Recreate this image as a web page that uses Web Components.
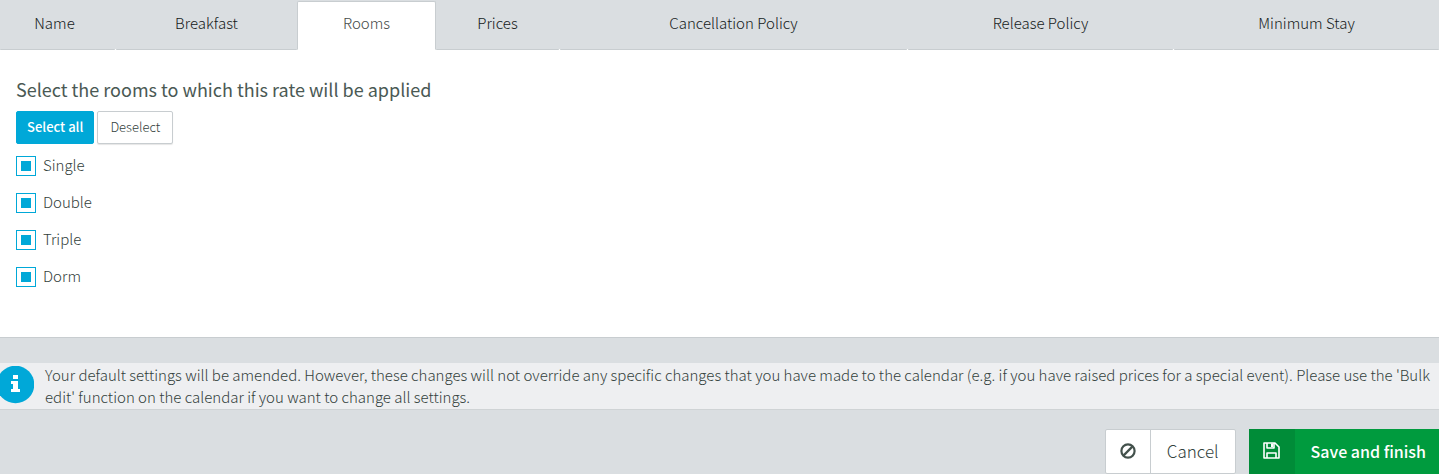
<!DOCTYPE html>
<html lang="en">
<head>
<meta charset="utf-8">
<meta name="viewport" content="width=device-width, initial-scale=1">
<title>Rate rooms</title>
<style>
  html { background: #dadee1; }
  body {
    margin: 0;
    color: #33413c;
    font-family: "Source Sans Pro", "Noto Sans CJK SC", sans-serif;
    font-size: 15px;
    font-weight: 300;
    line-height: 22px;
    --accent: #00a8d8;
    --line: #c8cdd0;
    --bar: #dadee1;
  }
</style>
</head>
<body>
<rate-page></rate-page>
<script>
  const define = (name, html, setup) => {
    const template = document.createElement('template');
    template.innerHTML = '<style>*{box-sizing:border-box}button,input{font:inherit;margin:0}</style>' + html;
    customElements.define(name, class extends HTMLElement {
      constructor() {
        super();
        this.attachShadow({ mode: 'open' }).append(template.content.cloneNode(true));
      }
      connectedCallback() { if (setup) setup(this, this.shadowRoot); }
    });
  };

  define('rate-tab', `
    <style>
      :host { display: block; }
      button {
        display: block; width: 100%; height: 50px; padding: 0 0 4px;
        border: 1px solid transparent; border-bottom-color: var(--line);
        background: var(--bar); color: #151a1a; line-height: 22px; cursor: pointer;
      }
      :host([first]) button { padding-right: 6px; }
      :host([gap]) { padding-left: 1px; }
      :host([selected]) button {
        height: 49px; margin-top: 1px; padding-bottom: 5px; background: #fff; color: #444a48;
        border-color: var(--line); border-bottom-color: #fff; border-radius: 2px 2px 0 0;
      }
    </style>
    <button type="button" role="tab"><slot></slot></button>
  `, (host, root) => {
    root.querySelector('button').setAttribute('aria-selected', host.hasAttribute('selected'));
  });

  define('rate-tabs', `
    <style>
      :host {
        display: grid; height: 50px;
        grid-template-columns: 115fr 182fr 139fr 123fr 348fr 266fr 266fr;
        background: linear-gradient(var(--bar) 49px, #fff 49px);
      }
    </style>
    <slot></slot>
  `, host => host.setAttribute('role', 'tablist'));

  define('small-button', `
    <style>
      :host { display: block; }
      button {
        display: block; height: 33px; padding: 0 12px 2px; font-size: 13px; line-height: 20px;
        border: 1px solid var(--line); border-radius: 2px; background: #fff; color: #33413c;
        box-shadow: 0 1px 1px #0000001a; cursor: pointer;
      }
      :host([primary]) button {
        padding: 0 10px 2px; background: var(--accent); border-color: var(--accent); color: #fff;
        font-weight: 500; box-shadow: none;
      }
    </style>
    <button type="button"><slot></slot></button>
  `);

  define('room-option', `
    <style>
      :host { display: block; }
      label { display: flex; gap: 7px; height: 20px; line-height: 18px; }
      input {
        appearance: none; width: 20px; height: 20px; padding: 4px;
        border: 1px solid var(--accent); background: #fff;
      }
      input:checked { background: var(--accent) content-box; }
    </style>
    <label><input type="checkbox" checked><span><slot></slot></span></label>
  `);

  define('info-note', `
    <style>
      :host {
        display: flex; padding: 1px 4px 0 0; min-height: 47px;
        background: #eeeff1; border-bottom: 1px solid #cfd3d5;
      }
      svg { flex: none; width: 38px; height: 38px; margin: 2px 11px 0 -4px; }
      p { margin: 0; }
    </style>
    <svg viewBox="0 0 38 38" aria-hidden="true">
      <circle cx="19.500" cy="18.500" r="18.800" fill="var(--accent)"/>
      <path fill="#fff" d="M17 9h5v4h-5zM15 15h7v8h2v3h-9v-3h2v-5h-2z"/>
    </svg>
    <p><slot></slot></p>
  `);

  define('action-button', `
    <style>
      :host { display: block; }
      button {
        display: flex; align-items: stretch; height: 45px; padding: 0;
        border: 1px solid var(--line); border-radius: 2px; background: #fff;
        color: #33413c; font-size: 17px; line-height: 24px; cursor: pointer;
      }
      .icon {
        display: flex; align-items: center; justify-content: center;
        width: 45px; border-right: 1px solid var(--line);
      }
      .text { padding: 9px 16px 0; }
      :host([primary]) button {
        border-color: #009b3e; border-width: 0; border-radius: 2px 0 0 2px;
        background: #009b3e; color: #fff; font-size: 16px; font-weight: 500;
      }
      :host([primary]) .icon { width: 46px; background: #008c38; border: 0; }
      :host([primary]) .text { padding: 10px 13px 0 16px; }
    </style>
    <button type="button"><span class="icon"><slot name="icon"></slot></span><span class="text"><slot></slot></span></button>
  `);

  define('rate-page', `
    <style>
      :host { display: block; }
      main { min-height: 288px; padding: 27px 16px; background: #fff; border-bottom: 1px solid var(--line); }
      h2 { margin: 0 0 10px; color: #4a5954; font-size: 18px; line-height: 24px; font-weight: 400; }
      .choose { display: flex; gap: 3px; margin-bottom: 12px; }
      .rooms { display: grid; gap: 17px; }
      info-note { margin-top: 25px; }
      footer { display: flex; justify-content: flex-end; gap: 13px; padding-top: 19px; }
      svg { display: block; margin-bottom: 2px; }
    </style>
    <rate-tabs>
      <rate-tab first>Name</rate-tab>
      <rate-tab gap>Breakfast</rate-tab>
      <rate-tab selected>Rooms</rate-tab>
      <rate-tab>Prices</rate-tab>
      <rate-tab gap>Cancellation Policy</rate-tab>
      <rate-tab gap>Release Policy</rate-tab>
      <rate-tab gap>Minimum Stay</rate-tab>
    </rate-tabs>
    <main>
      <h2>Select the rooms to which this rate will be applied</h2>
      <div class="choose">
        <small-button primary>Select all</small-button>
        <small-button>Deselect</small-button>
      </div>
      <div class="rooms">
        <room-option>Single</room-option>
        <room-option>Double</room-option>
        <room-option>Triple</room-option>
        <room-option>Dorm</room-option>
      </div>
    </main>
    <info-note>Your default settings will be amended. However, these changes will not override any specific changes that you have made to the calendar (e.g. if you have raised prices for a special event). Please use the 'Bulk edit' function on the calendar if you want to change all settings.</info-note>
    <footer>
      <action-button>
        <svg slot="icon" width="16" height="16" viewBox="0 0 16 16" fill="none" stroke="#43514c" stroke-width="2.2" aria-hidden="true">
          <circle cx="8" cy="8" r="6.6"/><path d="M3.4 12.6 12.6 3.4"/>
        </svg>
        Cancel
      </action-button>
      <action-button primary>
        <svg slot="icon" width="17" height="17" viewBox="0 0 17 17" fill="none" stroke="#fff" stroke-width="1.6" stroke-linejoin="round" aria-hidden="true">
          <path d="M1 1h11l4 4v11H1zM4 16v-5h9v5M4 1v5h7V1"/><path d="M9 1.5v3.500" stroke-width="2"/>
        </svg>
        Save and finish
      </action-button>
    </footer>
  `);
</script>
</body>
</html>
